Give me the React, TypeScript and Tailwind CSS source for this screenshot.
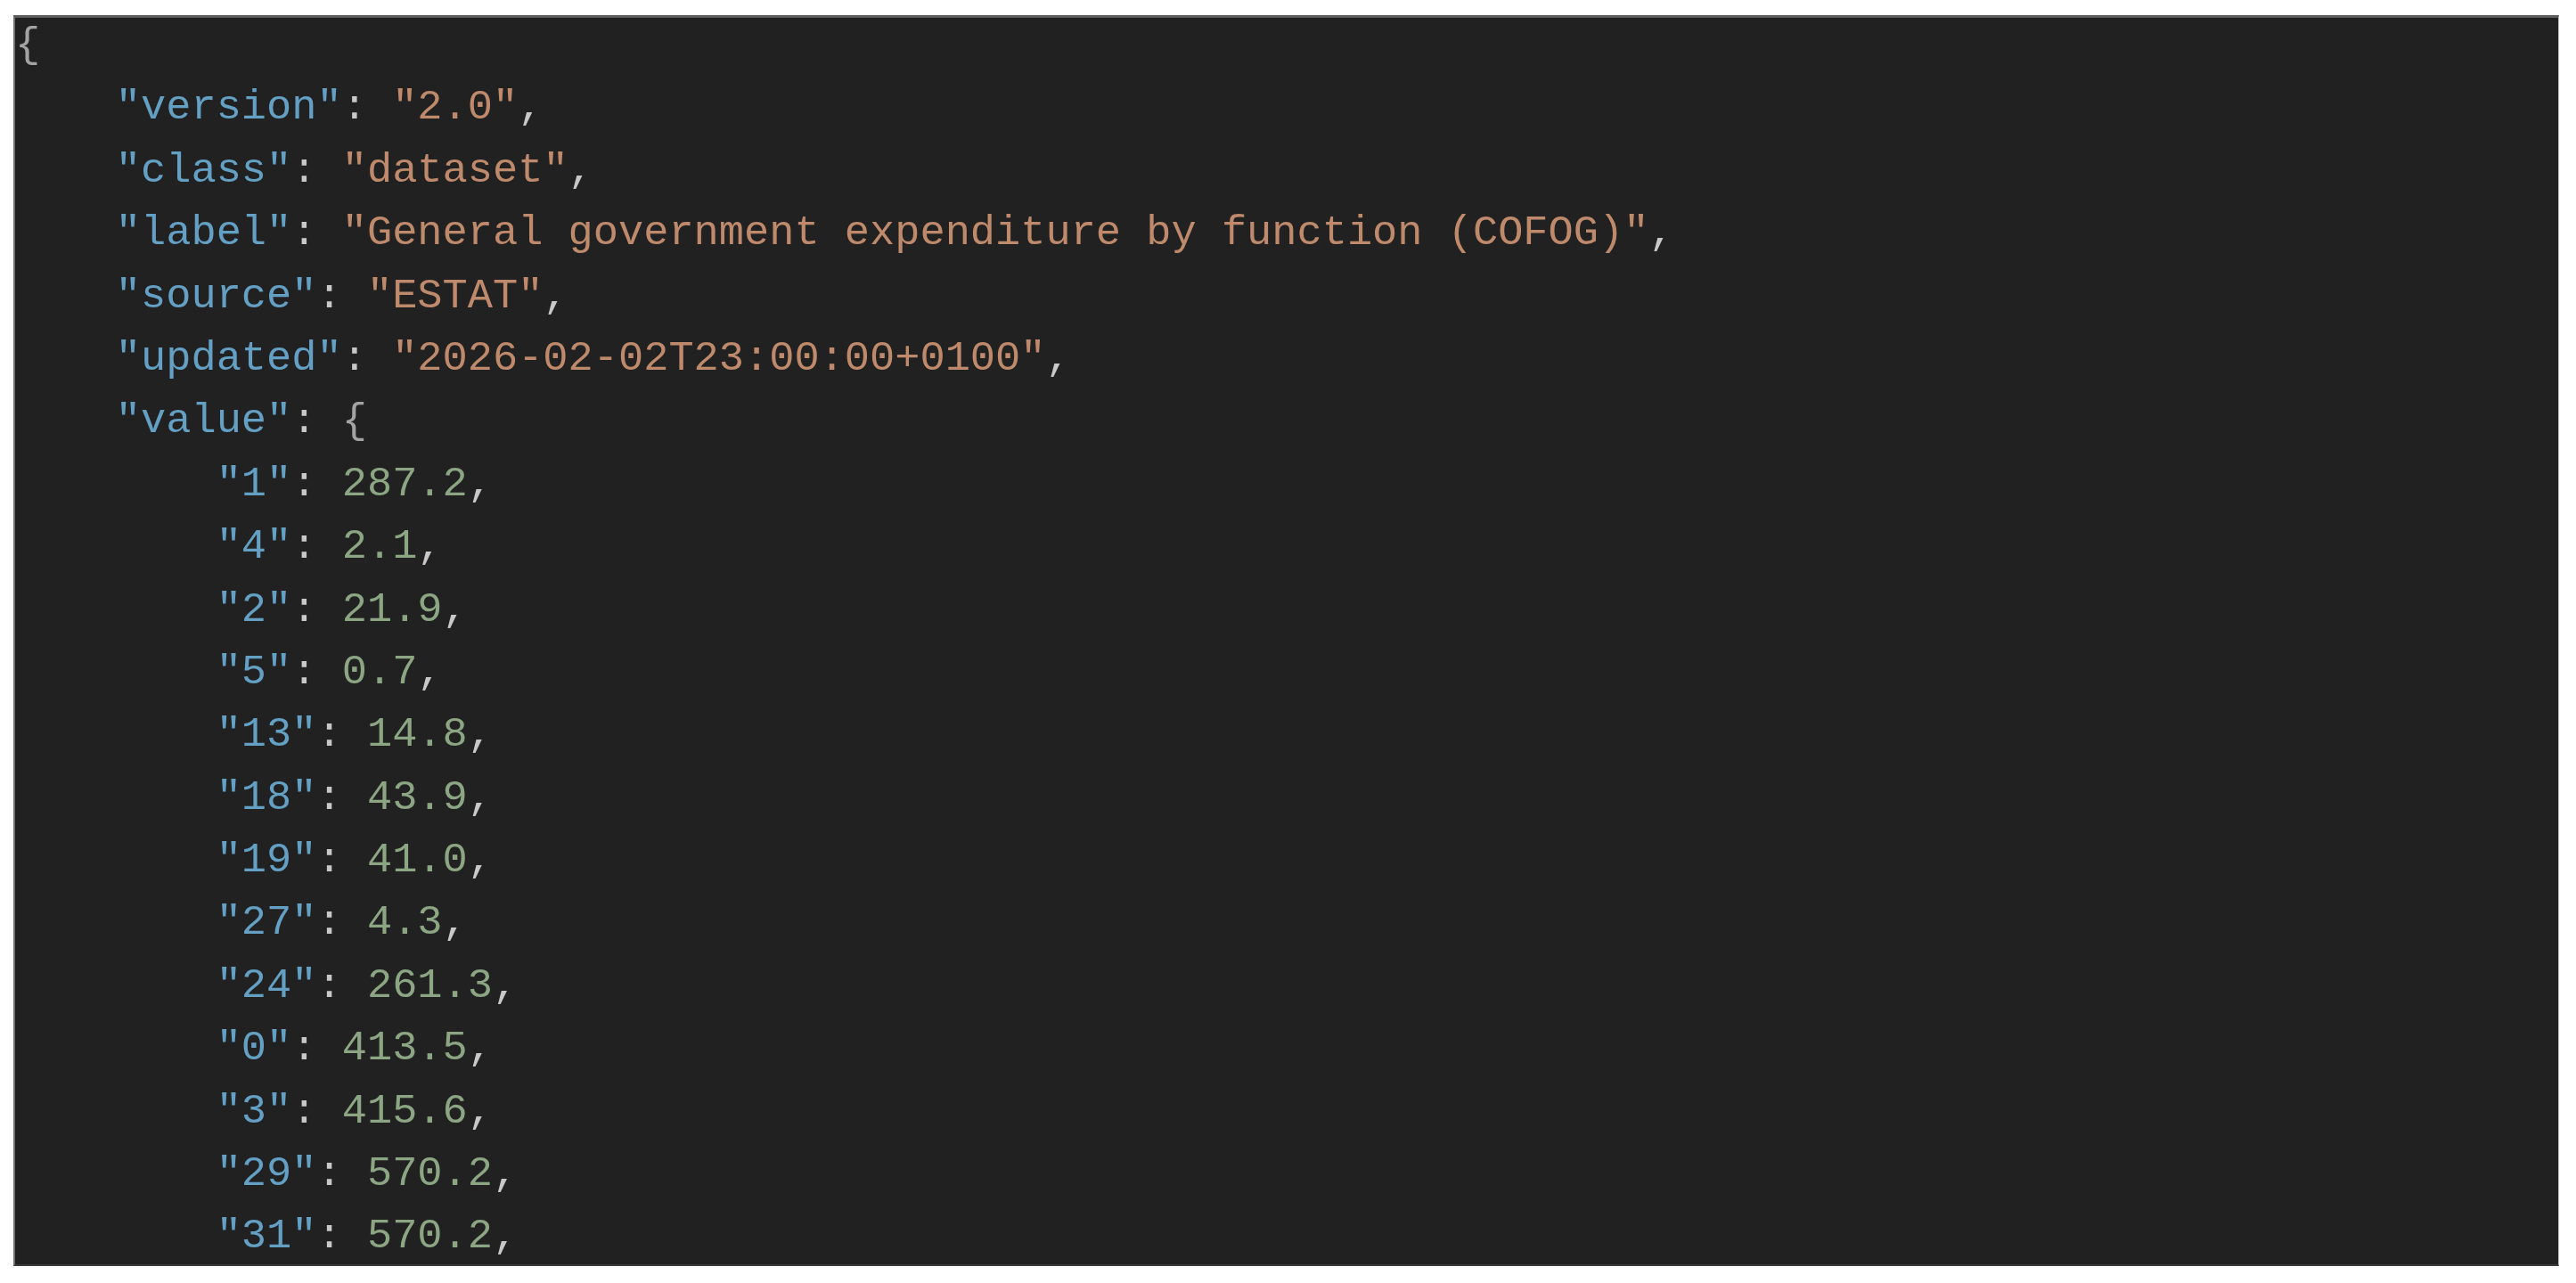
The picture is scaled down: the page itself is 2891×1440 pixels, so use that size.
import React from "react";

type Line = {
    indent: number;
    key?: string;
    value?: string;
    kind?: "str" | "num" | "open";
};

const lines: Line[] = [
    { indent: 0, kind: "open" },
    { indent: 1, key: "version", value: "2.0", kind: "str" },
    { indent: 1, key: "class", value: "dataset", kind: "str" },
    { indent: 1, key: "label", value: "General government expenditure by function (COFOG)", kind: "str" },
    { indent: 1, key: "source", value: "ESTAT", kind: "str" },
    { indent: 1, key: "updated", value: "2026-02-02T23:00:00+0100", kind: "str" },
    { indent: 1, key: "value", kind: "open" },
    { indent: 2, key: "1", value: "287.2", kind: "num" },
    { indent: 2, key: "4", value: "2.1", kind: "num" },
    { indent: 2, key: "2", value: "21.9", kind: "num" },
    { indent: 2, key: "5", value: "0.7", kind: "num" },
    { indent: 2, key: "13", value: "14.8", kind: "num" },
    { indent: 2, key: "18", value: "43.9", kind: "num" },
    { indent: 2, key: "19", value: "41.0", kind: "num" },
    { indent: 2, key: "27", value: "4.3", kind: "num" },
    { indent: 2, key: "24", value: "261.3", kind: "num" },
    { indent: 2, key: "0", value: "413.5", kind: "num" },
    { indent: 2, key: "3", value: "415.6", kind: "num" },
    { indent: 2, key: "29", value: "570.2", kind: "num" },
    { indent: 2, key: "31", value: "570.2", kind: "num" },
];

const CodeLine: React.FC<{ line: Line }> = ({ line }) => {
    const pad = "    ".repeat(line.indent);
    return (
        <div className="h-[70.4px] whitespace-pre">
            {pad}
            {line.key !== undefined && (
                <>
                    <span className="text-[#649fc4]">"{line.key}"</span>
                    <span className="text-[#c8c8c8]">: </span>
                </>
            )}
            {line.kind === "open" && <span className="text-[#a3a3a3]">{"{"}</span>}
            {line.kind === "str" && (
                <>
                    <span className="text-[#bf8a6c]">"{line.value}"</span>
                    <span className="text-[#c8c8c8]">,</span>
                </>
            )}
            {line.kind === "num" && (
                <>
                    <span className="text-[#8ca684]">{line.value}</span>
                    <span className="text-[#c8c8c8]">,</span>
                </>
            )}
        </div>
    );
};

export default function App() {
    return (
        <div className="w-[2891px] h-[1440px] bg-white pt-[17px] pl-[15px]">
            <div className="w-[2857px] h-[1404px] bg-[#212121] border-t-[3px] border-t-[#5c5c5c] border-l-2 border-l-[#707070] border-r border-r-[#bdbdbd] border-b-2 border-b-[#3a3a3a] overflow-hidden">
                <div className="-mt-[4px] text-[47px] leading-[70.4px] font-['Liberation_Mono','Courier_New',monospace] blur-[0.6px]">
                    {lines.map((line, key) => (
                        <CodeLine key={key} line={line} />
                    ))}
                </div>
            </div>
        </div>
    );
}
